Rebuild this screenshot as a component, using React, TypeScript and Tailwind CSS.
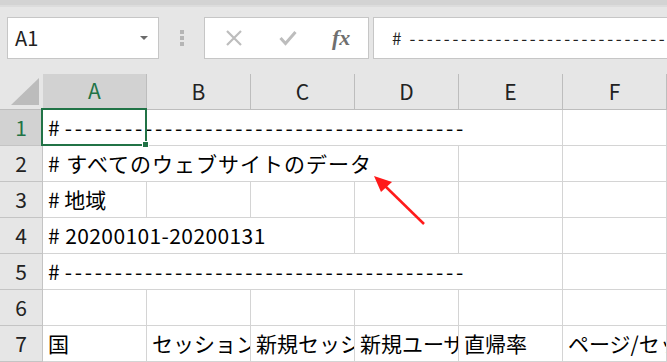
import React from "react";

const FONT = "font-['Noto_Sans_CJK_JP','Noto_Sans',sans-serif]";

function RowHeader({ n, active }: { n: number; active?: boolean }) {
  return (
    <div
      className={`w-[43px] h-[36px] shrink-0 flex items-center justify-center border-r border-b border-[#c4c4c4] text-[21px] ${
        active ? "bg-[#d2d2d2] text-[#217346] border-r-[#217346]" : "bg-[#e6e6e6] text-[#222222]"
      }`}
    >
      {n}
    </div>
  );
}

function Cell({ w, children }: { w: string; children?: React.ReactNode }) {
  return (
    <div
      className={`${w} h-[36px] shrink-0 flex items-center pl-[5px] border-r border-b border-[#d4d4d4] bg-white text-[21px] text-black whitespace-nowrap overflow-hidden`}
    >
      {children}
    </div>
  );
}

const DASHES = "----------------------------------------";

function DashLine() {
  return (
    <span>
      #<span className="ml-[5px] tracking-[2.75px]">{DASHES}</span>
    </span>
  );
}

export default function App() {
  const cols = ["A", "B", "C", "D", "E", "F"];
  return (
    <div className={`relative w-[667px] h-[362px] overflow-hidden bg-[#e6e6e6] ${FONT}`}>
      {/* top strip */}
      <div className="h-[5px] bg-[#d3d3d3]" />
      <div className="h-[2px] bg-[#dcdcdc]" />

      {/* formula toolbar */}
      <div className="flex items-center pt-[10px] pl-[7px] h-[52px]">
        <div className="w-[152px] h-[42px] shrink-0 bg-white border border-[#c6c6c6] flex items-center justify-between pl-[7px] pr-[10px]">
          <span className="text-[20px] text-[#222]">A1</span>
          <svg width="8" height="5" viewBox="0 0 8 5">
            <path d="M0 0 L8 0 L4 4 Z" fill="#6b6b6b" />
          </svg>
        </div>
        <div className="w-[45px] shrink-0 flex flex-col items-center gap-[2px]">
          <div className="w-[4px] h-[4px] bg-[#b5b5b5]" />
          <div className="w-[4px] h-[4px] bg-[#b5b5b5]" />
          <div className="w-[4px] h-[4px] bg-[#b5b5b5]" />
        </div>
        <div className="w-[165px] h-[42px] shrink-0 bg-white border border-[#c6c6c6] flex items-center">
          <div className="w-[56px] flex justify-center pl-[2px]">
            <svg width="18" height="18" viewBox="0 0 18 18">
              <path d="M2 2 L16 16 M16 2 L2 16" stroke="#bdbdbd" strokeWidth="2.2" />
            </svg>
          </div>
          <div className="w-[54px] flex justify-center">
            <svg width="18" height="16" viewBox="0 0 18 16">
              <path d="M1.5 8 L6.5 13.5 L16.5 2" stroke="#bdbdbd" strokeWidth="3" fill="none" />
            </svg>
          </div>
          <div className="w-[54px] flex justify-center">
            <span className="font-['Liberation_Serif',serif] italic font-bold text-[22px] text-[#6f6f6f] leading-none">fx</span>
          </div>
        </div>
        <div className="ml-[4px] h-[42px] w-[320px] shrink-0 bg-white border border-[#c6c6c6] flex items-center pl-[18px] overflow-hidden whitespace-nowrap text-[17px] text-[#222]">
          #<span className="ml-[8px] tracking-[2.7px]">{DASHES}</span>
        </div>
      </div>

      {/* column headers */}
      <div className="flex mt-[15px] h-[36px]">
        <div className="w-[43px] h-[36px] shrink-0 border-b border-[#bdbdbd] relative">
          <svg className="absolute left-[11px] top-[4px]" width="29" height="28" viewBox="0 0 29 28">
            <path d="M0 27 L28 27 L28 0 Z" fill="#bcbcbc" />
          </svg>
        </div>
        {cols.map((c, i) => (
          <div
            key={c}
            className={`w-[104px] h-[36px] shrink-0 flex items-center justify-center border-r border-[#bdbdbd] text-[21px] ${
              i === 0 ? "bg-[#d2d2d2] text-[#217346] border-b-2 border-b-[#217346]" : "text-[#222] border-b"
            }`}
          >
            {c}
          </div>
        ))}
      </div>

      {/* rows */}
      <div className="flex">
        <RowHeader n={1} active />
        <Cell w="w-[520px]">
          <DashLine />
        </Cell>
        <Cell w="w-[104px]" />
      </div>
      <div className="flex">
        <RowHeader n={2} />
        <Cell w="w-[416px]">
          <span className="tracking-[1px]"># すべてのウェブサイトのデータ</span>
        </Cell>
        <Cell w="w-[104px]" />
        <Cell w="w-[104px]" />
      </div>
      <div className="flex">
        <RowHeader n={3} />
        <Cell w="w-[104px]"># 地域</Cell>
        <Cell w="w-[104px]" />
        <Cell w="w-[104px]" />
        <Cell w="w-[104px]" />
        <Cell w="w-[104px]" />
        <Cell w="w-[104px]" />
      </div>
      <div className="flex">
        <RowHeader n={4} />
        <Cell w="w-[312px]">
          <span className="tracking-[0.4px]"># 20200101-20200131</span>
        </Cell>
        <Cell w="w-[104px]" />
        <Cell w="w-[104px]" />
        <Cell w="w-[104px]" />
      </div>
      <div className="flex">
        <RowHeader n={5} />
        <Cell w="w-[520px]">
          <DashLine />
        </Cell>
        <Cell w="w-[104px]" />
      </div>
      <div className="flex">
        <RowHeader n={6} />
        <Cell w="w-[104px]" />
        <Cell w="w-[104px]" />
        <Cell w="w-[104px]" />
        <Cell w="w-[104px]" />
        <Cell w="w-[104px]" />
        <Cell w="w-[104px]" />
      </div>
      <div className="flex">
        <RowHeader n={7} />
        <Cell w="w-[104px]">国</Cell>
        <Cell w="w-[104px]">セッション</Cell>
        <Cell w="w-[104px]">新規セッション率</Cell>
        <Cell w="w-[104px]">新規ユーザー</Cell>
        <Cell w="w-[104px]">直帰率</Cell>
        <Cell w="w-[104px]">ページ/セッション</Cell>
      </div>

      {/* selection */}
      <div className="absolute left-[41px] top-[108px] w-[106px] h-[38px] border-2 border-[#217346]" />
      <div className="absolute left-[142px] top-[141px] w-[7px] h-[7px] bg-[#217346] border border-white" />

      {/* red arrow */}
      <svg className="absolute left-0 top-0" width="667" height="362" viewBox="0 0 667 362">
        <line x1="424" y1="224" x2="384" y2="185" stroke="#ff1a1a" strokeWidth="2.5" />
        <path d="M374 176 L392 182 L381 192 Z" fill="#ff1a1a" />
      </svg>
    </div>
  );
}
